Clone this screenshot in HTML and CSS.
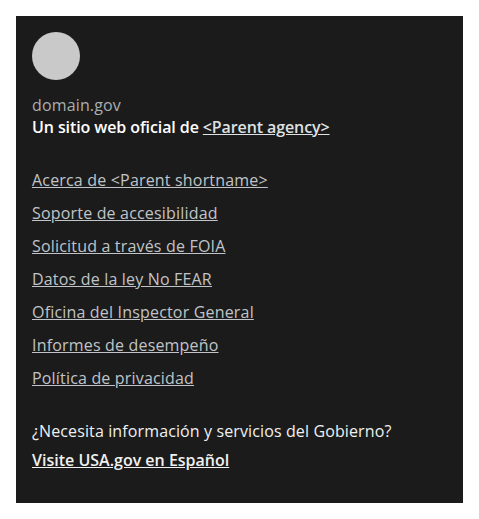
FILE: index.html
```
<!DOCTYPE html>
<html lang="es">
<head>
<meta charset="utf-8">
<link rel="stylesheet" href="styles.css">
</head>
<body>
<section class="identifier">
  <div class="identity">
    <div class="logo"></div>
    <p class="domain">domain.gov</p>
    <p class="disclaimer">Un sitio web oficial de <a href="#">&lt;Parent agency&gt;</a></p>
  </div>
  <ul class="links">
    <li><a href="#">Acerca de &lt;Parent shortname&gt;</a></li>
    <li><a href="#">Soporte de accesibilidad</a></li>
    <li><a href="#">Solicitud a través de FOIA</a></li>
    <li><a href="#">Datos de la ley No FEAR</a></li>
    <li><a href="#">Oficina del Inspector General</a></li>
    <li><a href="#">Informes de desempeño</a></li>
    <li><a href="#">Política de privacidad</a></li>
  </ul>
  <div class="usagov">
    <p class="usagov-desc">¿Necesita información y servicios del Gobierno?</p>
    <a class="usagov-link" href="#">Visite USA.gov en Español</a>
  </div>
</section>
</body>
</html>
```
FILE: styles.css
```
html, body {
  margin: 0;
  padding: 0;
  background: #ffffff;
}
body {
  padding: 16px;
  font-family: "Open Sans", sans-serif;
  font-size: 16px;
}
.identifier {
  background: #1b1b1b;
  padding: 16px 16px 32px;
  height: 487px;
  box-sizing: border-box;
}
.identity {
  display: flex;
  flex-direction: column;
}
.logo {
  width: 48px;
  height: 48px;
  border-radius: 50%;
  background: #c9c9c9;
  margin-bottom: 14px;
}
.domain {
  margin: 0;
  color: #a9aeb1;
  line-height: 22px;
  letter-spacing: 0.15px;
}
.disclaimer {
  margin: 0;
  color: #ffffff;
  font-weight: 600;
  line-height: 22px;
  letter-spacing: -0.1px;
}
.disclaimer a {
  color: #dfe1e2;
}
.links {
  list-style: none;
  margin: 31px 0 0;
  padding: 0;
  display: flex;
  flex-direction: column;
  gap: 11px;
}
.links li {
  line-height: 22px;
}
.links a {
  color: #c0c4c8;
  letter-spacing: 0.18px;
}
.usagov {
  margin-top: 31px;
  display: flex;
  flex-direction: column;
  align-items: flex-start;
  gap: 7px;
}
.usagov-desc {
  margin: 0;
  color: #f0f0f0;
  line-height: 22px;
  letter-spacing: 0.12px;
}
.usagov-link {
  color: #f0f0f0;
  font-weight: 600;
  line-height: 22px;
}
```
